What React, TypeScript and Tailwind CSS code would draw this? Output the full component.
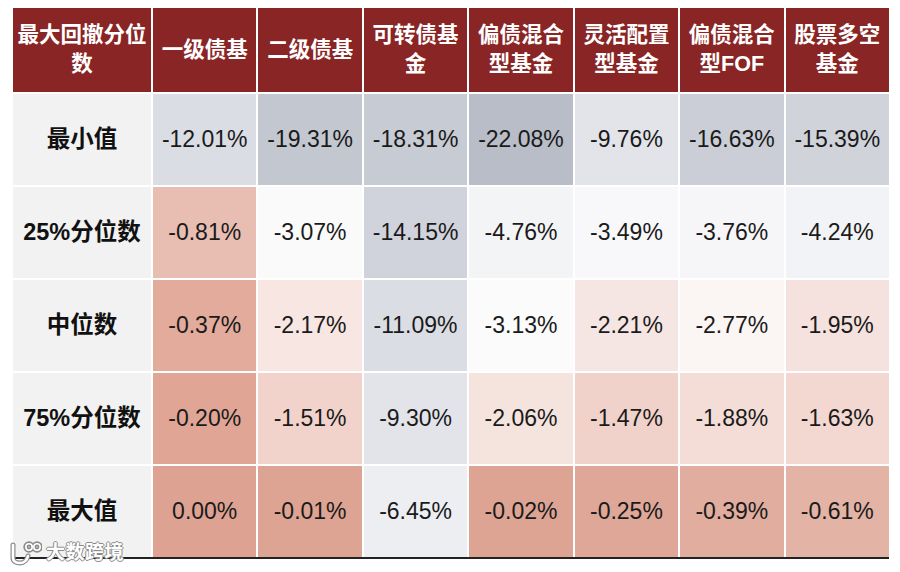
const headers = [
  ["最大回撤分位", "数"],
  ["一级债基"],
  ["二级债基"],
  ["可转债基", "金"],
  ["偏债混合", "型基金"],
  ["灵活配置", "型基金"],
  ["偏债混合", "型FOF"],
  ["股票多空", "基金"],
];

type Cell = { v: string; bg: string };

const rows: { label: string; cells: Cell[] }[] = [
  {
    label: "最小值",
    cells: [
      { v: "-12.01%", bg: "bg-[#dadde4]" },
      { v: "-19.31%", bg: "bg-[#c3c7d0]" },
      { v: "-18.31%", bg: "bg-[#c7cbd3]" },
      { v: "-22.08%", bg: "bg-[#b8bdc7]" },
      { v: "-9.76%", bg: "bg-[#e2e4e9]" },
      { v: "-16.63%", bg: "bg-[#cbced6]" },
      { v: "-15.39%", bg: "bg-[#d0d3da]" },
    ],
  },
  {
    label: "25%分位数",
    cells: [
      { v: "-0.81%", bg: "bg-[#e8bdb2]" },
      { v: "-3.07%", bg: "bg-[#fafafb]" },
      { v: "-14.15%", bg: "bg-[#d0d3db]" },
      { v: "-4.76%", bg: "bg-[#f3f4f6]" },
      { v: "-3.49%", bg: "bg-[#f8f8fa]" },
      { v: "-3.76%", bg: "bg-[#f6f6f8]" },
      { v: "-4.24%", bg: "bg-[#f2f3f6]" },
    ],
  },
  {
    label: "中位数",
    cells: [
      { v: "-0.37%", bg: "bg-[#e2ab9c]" },
      { v: "-2.17%", bg: "bg-[#f7e6e2]" },
      { v: "-11.09%", bg: "bg-[#dadde3]" },
      { v: "-3.13%", bg: "bg-[#fbfbfc]" },
      { v: "-2.21%", bg: "bg-[#f6e6e3]" },
      { v: "-2.77%", bg: "bg-[#fbf5f4]" },
      { v: "-1.95%", bg: "bg-[#f5e2de]" },
    ],
  },
  {
    label: "75%分位数",
    cells: [
      { v: "-0.20%", bg: "bg-[#e0a595]" },
      { v: "-1.51%", bg: "bg-[#f1d3cb]" },
      { v: "-9.30%", bg: "bg-[#e2e4e9]" },
      { v: "-2.06%", bg: "bg-[#f5e3de]" },
      { v: "-1.47%", bg: "bg-[#f1d2ca]" },
      { v: "-1.88%", bg: "bg-[#f4ddd7]" },
      { v: "-1.63%", bg: "bg-[#f2d8d1]" },
    ],
  },
  {
    label: "最大值",
    cells: [
      { v: "0.00%", bg: "bg-[#dda292]" },
      { v: "-0.01%", bg: "bg-[#dda393]" },
      { v: "-6.45%", bg: "bg-[#eceef2]" },
      { v: "-0.02%", bg: "bg-[#dda393]" },
      { v: "-0.25%", bg: "bg-[#dfa797]" },
      { v: "-0.39%", bg: "bg-[#e1ad9f]" },
      { v: "-0.61%", bg: "bg-[#e3b3a6]" },
    ],
  },
];

const cjk = "font-['Liberation_Sans','Noto_Sans_CJK_SC',sans-serif]";

export default function App() {
  return (
    <div className={`relative h-[572px] w-[900px] overflow-hidden bg-white pl-[13px] pt-[8px] ${cjk}`}>
      <div className="w-[876px]">
        <div className="grid h-[549px] grid-cols-[138px_repeat(7,1fr)] grid-rows-[84px_repeat(5,1fr)] gap-[2px] bg-white">
          {headers.map((h, i) => (
            <div
              key={i}
              className="flex flex-col items-center justify-center bg-[#8a2525] text-[21.5px] font-bold leading-[29px] text-white"
            >
              {h.map((line) => (
                <span key={line}>{line}</span>
              ))}
            </div>
          ))}
          {rows.map((r) => (
            <>
              <div
                key={r.label}
                className="flex items-center justify-center bg-[#f2f2f2] text-[23.5px] font-bold text-[#111]"
              >
                {r.label}
              </div>
              {r.cells.map((c, j) => (
                <div
                  key={r.label + j}
                  className={`flex items-center justify-center text-[23px] text-[#1a1a1a] ${c.bg}`}
                >
                  {c.v}
                </div>
              ))}
            </>
          ))}
        </div>
        <div className="h-[2px] bg-[#222]" />
      </div>

      {/* watermark */}
      <div className="absolute left-[8px] top-[539px] flex items-center gap-[4px] text-white [text-shadow:1px_0_0_#8a8a8a,-1px_0_0_#8a8a8a,0_1px_0_#8a8a8a,0_-1px_0_#8a8a8a]">
        <svg width="34" height="26" viewBox="0 0 34 26" fill="none" strokeLinecap="round">
          <g stroke="#8a8a8a" strokeWidth="5">
            <path d="M5 5v13c0 3 3 5 7 5s7-3 8-7" />
            <circle cx="21" cy="7" r="3.2" />
            <circle cx="29" cy="7" r="3.2" />
          </g>
          <g stroke="#fff" strokeWidth="2.6">
            <path d="M5 5v13c0 3 3 5 7 5s7-3 8-7" />
            <circle cx="21" cy="7" r="3.2" strokeWidth="1.6" />
            <circle cx="29" cy="7" r="3.2" strokeWidth="1.6" />
          </g>
        </svg>
        <span className="text-[19px] font-bold tracking-[0.5px]">大数跨境</span>
      </div>
    </div>
  );
}
